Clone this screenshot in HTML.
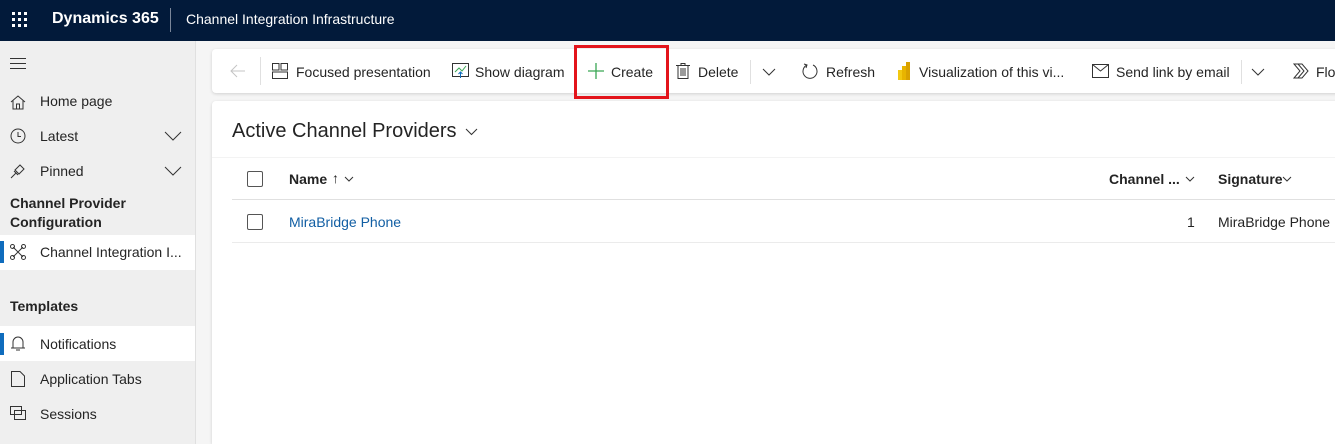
<!DOCTYPE html>
<html style="overflow:hidden;height:444px"><head><meta charset="utf-8"><style>
*{box-sizing:border-box;margin:0;padding:0}
body{width:1335px;height:444px;overflow:hidden;background:#f5f5f5;font-family:"Liberation Sans",sans-serif;font-size:14px;color:#242424;position:relative}
.hdr{position:absolute;left:0;top:0;width:1335px;height:41px;background:#021a3a;color:#fff}
.abs{position:absolute;white-space:nowrap}
.side{position:absolute;left:0;top:41px;width:196px;height:403px;background:#efefef;border-right:1px solid #e0e0e0}
.sel{position:absolute;left:0;width:195px;background:#fff}
.bar{position:absolute;left:0;width:4px;background:#0f6cbd}
.card{position:absolute;background:#fff;border-radius:4px;box-shadow:0 1px 3px rgba(0,0,0,.15)}
svg{position:absolute;overflow:visible}
.ic{stroke:#333;fill:none;stroke-width:1}
</style></head><body>
<div class="hdr">
<svg style="left:12px;top:12px" width="16" height="16"><g fill="#fff"><rect x="0" y="0" width="3" height="3"/><rect x="6" y="0" width="3" height="3"/><rect x="12" y="0" width="3" height="3"/><rect x="0" y="6" width="3" height="3"/><rect x="6" y="6" width="3" height="3"/><rect x="12" y="6" width="3" height="3"/><rect x="0" y="12" width="3" height="3"/><rect x="6" y="12" width="3" height="3"/><rect x="12" y="12" width="3" height="3"/></g></svg>
<div class="abs" style="left:52px;top:10px;font-size:16px;font-weight:bold">Dynamics 365</div>
<div class="abs" style="left:170px;top:8px;width:1px;height:24px;background:#7a8699"></div>
<div class="abs" style="left:186px;top:11px;font-size:14px">Channel Integration Infrastructure</div>
</div>
<div class="side">
<svg style="left:10px;top:17px" width="16" height="12" class="ic"><path d="M0 .5H16M0 5.5H16M0 10.5H16" stroke="#333"/></svg>
<svg style="left:10px;top:53px" width="16" height="16"><path class="ic" d="M1 8L8 2L15 8M3 6V15H13V6M6.5 15V10H9.5V15"/></svg>
<div class="abs" style="left:40px;top:52px">Home page</div>
<svg style="left:10px;top:87px" width="16" height="16"><circle class="ic" cx="8" cy="8" r="7"/><path class="ic" d="M8 4V8.5H11"/></svg>
<div class="abs" style="left:40px;top:87px">Latest</div>
<svg style="left:165px;top:91px" width="16" height="9"><path class="ic" d="M0 0L8 8L16 0"/></svg>
<svg style="left:10px;top:122px" width="16" height="16"><path class="ic" d="M1 15L6 10M4 8L8 12M5 7L10 2L14 6L9 11Z"/></svg>
<div class="abs" style="left:40px;top:122px">Pinned</div>
<svg style="left:165px;top:126px" width="16" height="9"><path class="ic" d="M0 0L8 8L16 0"/></svg>
<div class="abs" style="left:10px;top:153px;font-weight:bold;line-height:19px">Channel Provider<br>Configuration</div>
<div class="sel" style="top:194px;height:35px"></div><div class="bar" style="top:200px;height:22px"></div>
<svg style="left:10px;top:203px" width="16" height="16"><path class="ic" d="M3 3L13 13M13 3L3 13"/><circle class="ic" cx="2.5" cy="2.5" r="2" fill="#fff"/><circle class="ic" cx="13.5" cy="2.5" r="2" fill="#fff"/><circle class="ic" cx="2.5" cy="13.5" r="2" fill="#fff"/><circle class="ic" cx="13.5" cy="13.5" r="2" fill="#fff"/></svg>
<div class="abs" style="left:40px;top:203px">Channel Integration I...</div>
<div class="abs" style="left:10px;top:257px;font-weight:bold">Templates</div>
<div class="sel" style="top:285px;height:35px"></div><div class="bar" style="top:292px;height:22px"></div>
<svg style="left:11px;top:295px" width="14" height="16"><path class="ic" d="M2 12V6A5 5 0 0 1 12 6V12H2ZM0 12H14M5 14H9"/></svg>
<div class="abs" style="left:40px;top:295px">Notifications</div>
<svg style="left:11px;top:330px" width="14" height="16"><path class="ic" d="M.5 .5H9L13.5 5V15.5H.5Z"/></svg>
<div class="abs" style="left:40px;top:330px">Application Tabs</div>
<svg style="left:10px;top:365px" width="16" height="15"><path class="ic" d="M.5 .5H11.5V8.5H.5ZM4.5 4.5H15.5V13.5H4.5Z"/></svg>
<div class="abs" style="left:40px;top:365px">Sessions</div>
</div>

<div class="card" style="left:212px;top:49px;width:1140px;height:44px"></div>
<svg style="left:230px;top:64px" width="16" height="14"><path d="M15 7H1M7 1L1 7L7 13" stroke="#c4c4c4" fill="none"/></svg>
<div class="abs" style="left:260px;top:57px;width:1px;height:28px;background:#e0e0e0"></div>
<svg style="left:272px;top:63px" width="16" height="16"><path class="ic" d="M.5 .5H7V7H.5ZM9 .5H15.5V7H9ZM.5 9H15.5V15.5H.5Z"/></svg>
<div class="abs" style="left:296px;top:64px">Focused presentation</div>
<svg style="left:452px;top:63px" width="17" height="16"><path class="ic" d="M.5 .5H16.5V13.5H.5Z"/><path d="M3 9L7 5L10 8L14 3" stroke="#3aa655" fill="none"/><path d="M8.5 15V9M6.5 11L8.5 9L10.5 11" stroke="#0f6cbd" fill="none"/></svg>
<div class="abs" style="left:475px;top:64px">Show diagram</div>
<svg style="left:588px;top:63px" width="16" height="16"><path d="M8 0V16M0 8H16" stroke="#3aa655" stroke-width="1.3"/></svg>
<div class="abs" style="left:611px;top:64px">Create</div>
<div class="abs" style="left:574px;top:45px;width:95px;height:54px;border:3px solid #e3141b"></div>
<svg style="left:676px;top:63px" width="14" height="16"><path class="ic" d="M0 2.5H14M5 2.5V.5H9V2.5M2 2.5V15.5H12V2.5M5 5V13M7 5V13M9 5V13"/></svg>
<div class="abs" style="left:698px;top:64px">Delete</div>
<div class="abs" style="left:750px;top:60px;width:1px;height:24px;background:#e0e0e0"></div>
<svg style="left:763px;top:69px" width="12" height="7"><path class="ic" d="M0 0L6 6L12 0"/></svg>
<svg style="left:802px;top:63px" width="16" height="16"><path class="ic" d="M5 2A7 7 0 1 0 11 2M2 1L5 2L4 5"/></svg>
<div class="abs" style="left:826px;top:64px">Refresh</div>
<svg style="left:897px;top:62px" width="14" height="18"><rect x="1" y="8" width="4" height="10" fill="#f2c811"/><rect x="5" y="4" width="4" height="14" fill="#e8b400"/><rect x="9" y="0" width="4" height="18" fill="#d9a100"/></svg>
<div class="abs" style="left:919px;top:64px">Visualization of this vi...</div>
<svg style="left:1092px;top:64px" width="18" height="15"><path class="ic" d="M.5 .5H16.5V13.5H.5ZM.5 .5L8.5 7L16.5 .5"/></svg>
<div class="abs" style="left:1116px;top:64px">Send link by email</div>
<div class="abs" style="left:1241px;top:60px;width:1px;height:24px;background:#e0e0e0"></div>
<svg style="left:1252px;top:69px" width="12" height="7"><path class="ic" d="M0 0L6 6L12 0"/></svg>
<svg style="left:1293px;top:63px" width="16" height="16"><path class="ic" d="M1 1H9L15 8L9 15H1L7 8ZM5 1L11 8L5 15"/></svg>
<div class="abs" style="left:1316px;top:64px">Flo</div>

<div class="card" style="left:212px;top:101px;width:1140px;height:343px;border-radius:4px 4px 0 0"></div>
<div class="abs" style="left:232px;top:120px;font-size:20px">Active Channel Providers</div>
<svg style="left:466px;top:129px" width="11" height="6"><path class="ic" d="M0 0L5.5 5.5L11 0" stroke="#666"/></svg>
<div class="abs" style="left:212px;top:157px;width:1123px;height:1px;background:#f3f3f3"></div>
<div class="abs" style="left:247px;top:171px;width:16px;height:16px;border:1px solid #555;border-radius:2px"></div>
<div class="abs" style="left:289px;top:171px;font-weight:bold">Name</div>
<div class="abs" style="left:332px;top:170px">↑</div>
<svg style="left:345px;top:177px" width="8" height="5"><path class="ic" d="M0 0L4 4L8 0"/></svg>
<div class="abs" style="left:1109px;top:171px;font-weight:bold">Channel ...</div>
<svg style="left:1186px;top:177px" width="8" height="5"><path class="ic" d="M0 0L4 4L8 0"/></svg>
<div class="abs" style="left:1218px;top:171px;font-weight:bold">Signature</div>
<svg style="left:1283px;top:177px" width="8" height="5"><path class="ic" d="M0 0L4 4L8 0"/></svg>
<div class="abs" style="left:232px;top:199px;width:1103px;height:1px;background:#e0e0e0"></div>
<div class="abs" style="left:247px;top:214px;width:16px;height:16px;border:1px solid #555;border-radius:2px"></div>
<div class="abs" style="left:289px;top:214px;color:#115ea3">MiraBridge Phone</div>
<div class="abs" style="left:1187px;top:214px">1</div>
<div class="abs" style="left:1218px;top:214px">MiraBridge Phone</div>
<div class="abs" style="left:232px;top:242px;width:1103px;height:1px;background:#ebebeb"></div>
</body></html>
